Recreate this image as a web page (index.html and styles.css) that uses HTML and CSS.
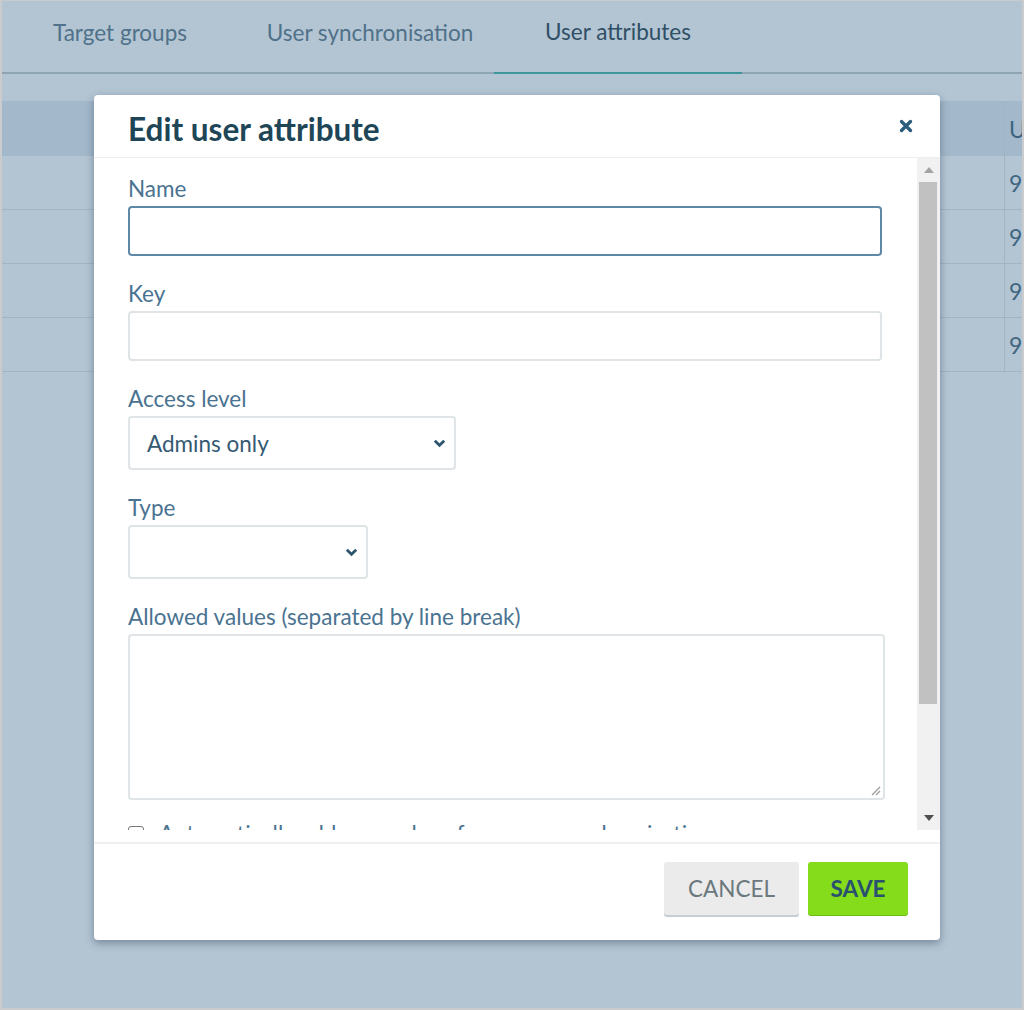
FILE: index.html
```html
<!DOCTYPE html>
<html lang="en">
<head>
  <meta charset="UTF-8" />
  <title>User attributes</title>
  <link rel="stylesheet" href="styles.css">
</head>
<body>

<div class="screen">
  <nav class="tabs">
    <a class="tab">Target groups</a>
    <a class="tab">User synchronisation</a>
    <a class="tab active">User attributes</a>
  </nav>

  <div class="attr-table">
    <div class="row head"><div class="cell"></div><div class="cell last">U</div></div>
    <div class="row"><div class="cell"></div><div class="cell last">9</div></div>
    <div class="row"><div class="cell"></div><div class="cell last">9</div></div>
    <div class="row"><div class="cell"></div><div class="cell last">9</div></div>
    <div class="row"><div class="cell"></div><div class="cell last">9</div></div>
  </div>

  <div class="modal">
    <header class="modal-head">
      <h2>Edit user attribute</h2>
      <button class="close" aria-label="Close">
        <svg width="14" height="14" viewBox="0 0 14 14">
          <path d="M2.5 2.5 L11.5 11.5 M11.5 2.5 L2.5 11.5" stroke="#2d5d7c" stroke-width="3.4" stroke-linecap="round"/>
        </svg>
      </button>
    </header>

    <div class="modal-body">
      <form class="form">
        <div class="field">
          <label>Name</label>
          <div class="input focus"></div>
        </div>
        <div class="field">
          <label>Key</label>
          <div class="input"></div>
        </div>
        <div class="field">
          <label>Access level</label>
          <div class="select access">
            <span>Admins only</span>
            <svg class="chevron" width="13" height="9" viewBox="0 0 13 9"><path d="M1.8 1.8 L6.5 6.3 L11.2 1.8" fill="none" stroke="#2f5670" stroke-width="2.8"/></svg>
          </div>
        </div>
        <div class="field">
          <label>Type</label>
          <div class="select type">
            <span></span>
            <svg class="chevron" width="13" height="9" viewBox="0 0 13 9"><path d="M1.8 1.8 L6.5 6.3 L11.2 1.8" fill="none" stroke="#2f5670" stroke-width="2.8"/></svg>
          </div>
        </div>
        <div class="field">
          <label>Allowed values (separated by line break)</label>
          <div class="textarea">
            <svg class="grip" width="12" height="12" viewBox="0 0 12 12"><path d="M11 3 L3 11 M11 7 L7 11" stroke="#9a9a9a" stroke-width="1.2"/></svg>
          </div>
        </div>
        <div class="check">
          <span class="box"></span>
          <span>Automatically add new values from user synchronisation</span>
        </div>
      </form>

      <div class="scrollbar">
        <div class="arrow"><svg width="10" height="6" viewBox="0 0 10 6"><path d="M0 6 L5 0 L10 6 Z" fill="#a3a3a3"/></svg></div>
        <div class="track"><div class="thumb"></div></div>
        <div class="arrow"><svg width="10" height="6" viewBox="0 0 10 6"><path d="M0 0 L5 6 L10 0 Z" fill="#505050"/></svg></div>
      </div>
    </div>

    <footer class="modal-foot">
      <button class="btn cancel">Cancel</button>
      <button class="btn save">Save</button>
    </footer>
  </div>
</div>

</body>
</html>
```

FILE: styles.css
```css
body {
  margin: 0;
  font-family: Lato, 'Open Sans', sans-serif;
}

.screen {
  position: relative;
  box-sizing: border-box;
  width: 1024px;
  height: 1010px;
  overflow: hidden;
  background: #b3c5d3;
  border: 2px solid #c9cbcc;
  border-top-width: 1px;
}

/* tab bar */
.tabs {
  display: flex;
  height: 71px;
  margin-left: -4px;
  border-bottom: 2px solid #8fa5b4;
}

.tab {
  width: 248px;
  display: flex;
  justify-content: center;
  align-items: center;
  padding-bottom: 10px;
  font-size: 22.5px;
  color: #4f7189;
  margin-bottom: -2px;
}

.tab:first-child {
  margin-left: -2px;
  margin-right: 2px;
}

.tab.active {
  color: #2f4f66;
  border-bottom: 2px solid #3e969b;
}

/* table behind the dialog */
.attr-table {
  margin-top: 27px;
}

.row {
  display: grid;
  grid-template-columns: 1002px 60px;
  height: 53px;
  border-bottom: 1px solid #a0b4c3;
}

.row.head {
  height: 55px;
  background: #a3b9cb;
  border-bottom: none;
}

.cell.last {
  border-left: 1px solid #a0b4c3;
  padding-left: 4px;
  display: flex;
  align-items: center;
  font-size: 23px;
  color: #3e6580;
}

/* dialog */
.modal {
  position: absolute;
  left: 92px;
  top: 94px;
  width: 846px;
  height: 845px;
  background: #fff;
  border-radius: 4px;
  box-shadow: 0 3px 8px rgba(40, 60, 80, 0.45);
  display: flex;
  flex-direction: column;
}

.modal-head {
  height: 63px;
  box-sizing: border-box;
  border-bottom: 1px solid #eceeef;
  display: flex;
  align-items: center;
  justify-content: space-between;
  padding: 6px 27px 0 34px;
}

.modal-head h2 {
  margin: 0;
  font-size: 31.5px;
  font-weight: 700;
  color: #1e4657;
}

.close {
  border: none;
  background: none;
  padding: 0;
  display: flex;
  margin-top: -6px;
}

.modal-body {
  display: flex;
  height: 672px;
}

.form {
  flex: 1;
  overflow: hidden;
  padding: 19px 35px 0 34px;
}

.field {
  margin-bottom: 26px;
}

.field label {
  display: block;
  font-size: 22.5px;
  line-height: 24px;
  margin-bottom: 5px;
  color: #4a7391;
}

.input,
.select,
.textarea {
  box-sizing: border-box;
  border: 2px solid #dfe5e7;
  border-radius: 4px;
  background: #fff;
}

.input {
  height: 50px;
}

.input.focus {
  border-color: #5f88a6;
}

.select {
  height: 54px;
  display: flex;
  align-items: center;
  justify-content: space-between;
  padding: 0 8px 0 17px;
  font-size: 22.5px;
  color: #355a73;
}

.select.access {
  width: 328px;
}

.select.type {
  width: 240px;
}

.textarea {
  width: 757px;
  height: 166px;
  display: flex;
  align-items: flex-end;
  justify-content: flex-end;
  padding: 2px;
}

.check {
  margin-top: -6px;
  display: flex;
  align-items: center;
  gap: 15px;
  font-size: 22.5px;
  color: #4a7391;
}

.check .box {
  width: 14px;
  height: 14px;
  border: 1.5px solid #777;
  border-radius: 3px;
}

/* scrollbar */
.scrollbar {
  width: 23px;
  background: #f1f1f1;
  display: flex;
  flex-direction: column;
}

.arrow {
  height: 24px;
  display: flex;
  align-items: center;
  justify-content: center;
}

.track {
  flex: 1;
}

.thumb {
  height: 522px;
  margin: 0 3px 0 2px;
  background: #c1c1c1;
}

/* footer */
.modal-foot {
  margin-top: 12px;
  border-top: 2px solid #f0f0f0;
  flex: 1;
  display: flex;
  justify-content: flex-end;
  align-items: flex-start;
  gap: 9px;
  padding: 18px 32px 0 0;
}

.btn {
  font-family: Lato, 'Open Sans', sans-serif;
  font-size: 22.5px;
  text-transform: uppercase;
  border: none;
  border-radius: 3px;
  height: 53px;
}

.btn.cancel {
  width: 135px;
  background: #ebebeb;
  color: #6b787d;
  box-shadow: 0 2px 0 #c4ced4;
}

.btn.save {
  width: 100px;
  background: #84dc1b;
  color: #2a5070;
  font-weight: 700;
  box-shadow: 0 1px 0 #6bbd14;
}
```
